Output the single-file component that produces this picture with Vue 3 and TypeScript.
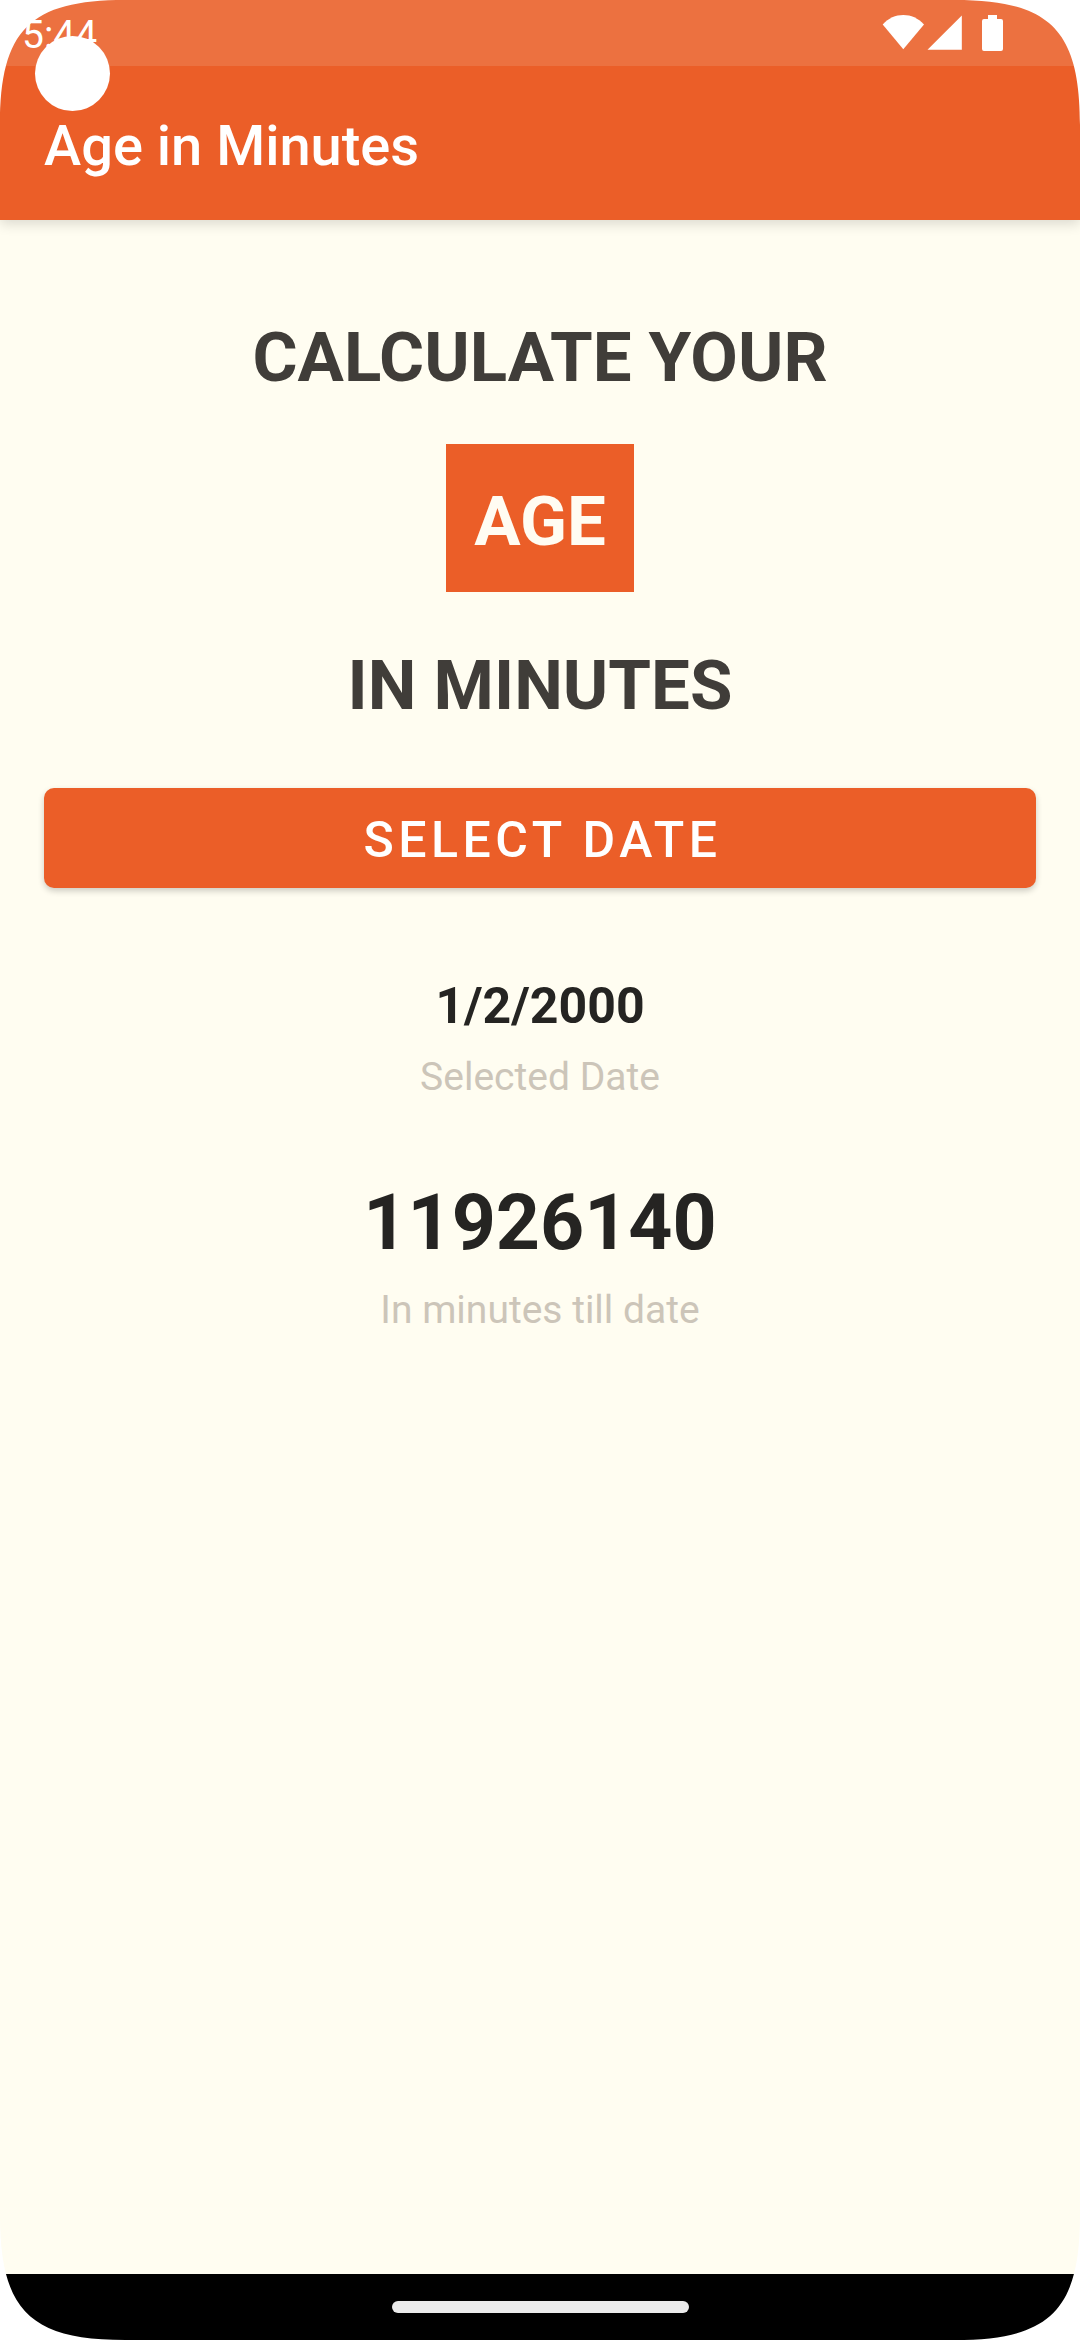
<script setup lang="ts">
import { ref } from 'vue'

interface Result {
  value: string
  label: string
  large: boolean
}

const title = 'Age in Minutes'
const clock = '5:44'
const corners = ['top-left', 'top-right', 'bottom-left', 'bottom-right']
const results = ref<Result[]>([
  { value: '1/2/2000', label: 'Selected Date', large: false },
  { value: '11926140', label: 'In minutes till date', large: true },
])
</script>

<template>
  <div class="screen">
    <header class="top">
      <div class="status-bar">
        <span class="clock">{{ clock }}</span>
        <svg class="status-icons" width="122" height="38" viewBox="0 0 122 38" fill="#fff" aria-hidden="true">
          <path d="M0.7 10.5C6.5 4 13.5 1 21.3 1S36 4 42 10.5L21.3 35.3Z" />
          <path d="M45.5 35.7L79.8 1.6V35.7Z" />
          <path d="M106 1h9v4h4a2 2 0 0 1 2 2v28a2 2 0 0 1-2 2h-17a2 2 0 0 1-2-2v-28a2 2 0 0 1 2-2h4z" />
        </svg>
      </div>
      <div class="app-bar">
        <h1 class="title">{{ title }}</h1>
      </div>
      <div class="camera"></div>
    </header>

    <main class="content">
      <h2 class="headline">
        <span class="line">CALCULATE YOUR</span>
        <span class="line badge">AGE</span>
        <span class="line">IN MINUTES</span>
      </h2>

      <button class="select-date" type="button">SELECT DATE</button>

      <section class="results">
        <div v-for="item in results" :key="item.label" class="result">
          <p class="value" :class="{ large: item.large }">{{ item.value }}</p>
          <p class="label">{{ item.label }}</p>
        </div>
      </section>
    </main>

    <footer class="nav-bar">
      <div class="handle"></div>
    </footer>

    <svg
      v-for="corner in corners"
      :key="corner"
      class="corner"
      :class="corner"
      width="125"
      height="125"
      viewBox="0 0 125 125"
      aria-hidden="true"
    >
      <path d="M0 0H125C30 0 0 30 0 125Z" fill="#fff" />
    </svg>
  </div>
</template>

<style>
body {
  margin: 0;
  background: #fff;
}
</style>

<style scoped>
.screen {
  position: relative;
  display: flex;
  flex-direction: column;
  min-height: 100vh;
  overflow: hidden;
  background: #fffdf1;
  font-family: Roboto, sans-serif;
}

.top {
  position: relative;
  background: #eb5e28;
  color: #fff;
  box-shadow: 0 4px 12px rgba(0, 0, 0, 0.14);
}

.status-bar {
  display: flex;
  align-items: center;
  justify-content: space-between;
  height: 66px;
  padding: 0 76px 0 22px;
  box-sizing: border-box;
  background: #ec7140;
}

.clock {
  font-size: 39px;
  line-height: 46px;
  padding-top: 4px;
}

.app-bar {
  display: flex;
  align-items: center;
  height: 154px;
  padding: 6px 44px 0;
  box-sizing: border-box;
}

.title {
  margin: 0;
  font-size: 56px;
  font-weight: 500;
  line-height: 64px;
}

.camera {
  position: absolute;
  top: 36px;
  left: 35px;
  width: 75px;
  height: 75px;
  border-radius: 50%;
  background: #fff;
}

.content {
  flex: 1;
  display: flex;
  flex-direction: column;
  padding: 60px 44px;
}

.headline {
  display: flex;
  flex-direction: column;
  align-items: center;
  gap: 16px;
  margin: 0 0 32px;
  color: #403d39;
  font-size: 69px;
  font-weight: 700;
  line-height: 98px;
}

.line {
  padding: 29px 28px 21px;
}

.badge {
  background: #eb5e28;
  color: #fffcf2;
}

.select-date {
  width: 100%;
  height: 100px;
  padding: 4px 0 0 5px;
  border: 0;
  border-radius: 10px;
  background: #eb5e28;
  color: #fff;
  font-family: inherit;
  font-size: 50px;
  font-weight: 500;
  letter-spacing: 0.09em;
  box-shadow: 0 3px 6px rgba(0, 0, 0, 0.2);
}

.results {
  display: flex;
  flex-direction: column;
  gap: 75px;
  margin-top: 88px;
  text-align: center;
}

.result {
  display: flex;
  flex-direction: column;
  gap: 16px;
}

.value {
  margin: 0;
  color: #252422;
  font-size: 50px;
  font-weight: 700;
  line-height: 60px;
}

.value.large {
  font-size: 77px;
  line-height: 92px;
}

.label {
  margin: 0;
  color: #ccc5b9;
  font-size: 39px;
  line-height: 50px;
}

.nav-bar {
  display: flex;
  align-items: center;
  justify-content: center;
  height: 66px;
  background: #000;
}

.handle {
  width: 297px;
  height: 12px;
  border-radius: 6px;
  background: #ebebeb;
}

.corner {
  position: absolute;
  display: block;
}

.top-left {
  top: 0;
  left: 0;
}

.top-right {
  top: 0;
  right: 0;
  transform: scaleX(-1);
}

.bottom-left {
  bottom: 0;
  left: 0;
  transform: scaleY(-1);
}

.bottom-right {
  right: 0;
  bottom: 0;
  transform: scale(-1, -1);
}
</style>
